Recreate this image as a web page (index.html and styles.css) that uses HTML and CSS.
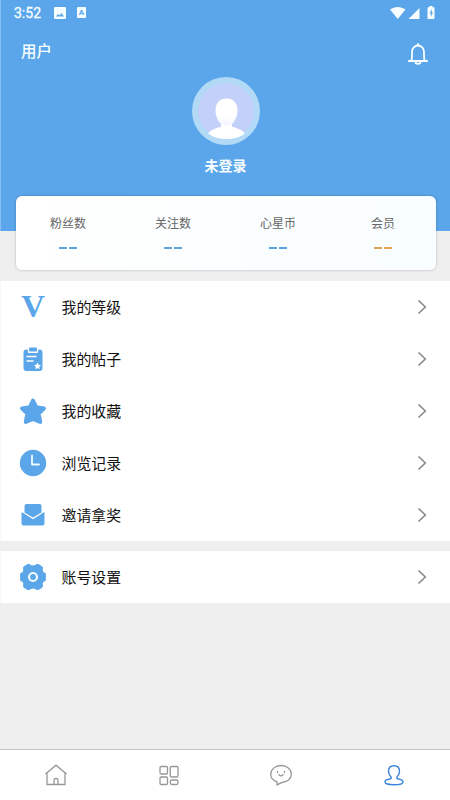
FILE: index.html
```html
<!DOCTYPE html>
<html lang="zh-CN">
<head>
<meta charset="utf-8">
<title>用户</title>
<link rel="stylesheet" href="styles.css">
</head>
<body>
<div class="app">
  <header class="hero">
    <div class="status">
      <span class="time">3:52</span>
      <svg class="st-image" width="12" height="12" viewBox="0 0 12 12"><rect width="12" height="12" rx="1.2" fill="#f4fdff"/><path d="M2 9.500 4 7l1.500 1.400L7.500 6 10 9.500z" fill="#5ba6ea"/></svg>
      <span class="st-letter">A</span>
      <svg class="st-right" width="46" height="14" viewBox="0 0 46 14" fill="#f8feff"><path d="M0 3.500C4.700 0 10.800 0 15.500 3.500L7.750 13z"/><path d="M29.500 2v11h-11z"/><path d="M39.500 1.200V0h3v1.200h1.300q.7 0 .7.700v10.400q0 .7-.7.700h-5.600q-.7 0-.7-.7V1.900q0-.7.7-.7z"/><path d="M41.800 3 39.500 7.500h1.300v3.500l2.200-4.500h-1.200z" fill="#5ba6ea"/></svg>
    </div>
    <div class="titlebar">
      <h1>用户</h1>
      <svg width="22" height="24" viewBox="0 0 22 24" fill="none" stroke="#f8feff" stroke-width="1.800" stroke-linecap="round" stroke-linejoin="round"><path d="M11 2v1.500M1.800 19h18.400M4 19c1-1.300 1-2.500 1-4.500V9.800a6 6.300 0 0 1 12 0v4.700c0 2 0 3.200 1 4.500"/><path d="M8.500 20a2.500 1.800 0 0 0 5 0"/></svg>
    </div>
    <div class="profile">
      <svg width="68" height="68" viewBox="0 0 68 68"><defs><linearGradient id="face" x1="0" y1="0" x2="0" y2="1"><stop offset=".6" stop-color="#fff"/><stop offset="1" stop-color="#f4f5ff"/></linearGradient></defs><circle cx="34" cy="34" r="34" fill="#b2daf6"/><circle cx="34" cy="34" r="28" fill="#c3d1fa"/><path d="M16 56.500c3-3.700 8-5.500 13-6.700V45h11v4.800c5 1.200 10 3 13 6.700C48 60.300 41 62 34.500 62S21 60.300 16 56.500z" fill="#fff"/><path d="M34.500 21.500c6.800 0 11 4.800 11 11.500 0 8.500-4.600 16-11 16s-11-7.500-11-16c0-6.700 4.200-11.500 11-11.500z" fill="url(#face)"/></svg>
      <strong>未登录</strong>
    </div>
  </header>
  <section class="stats">
    <div class="stat"><span>粉丝数</span><div class="dashes"><i></i><i></i></div></div>
    <div class="stat"><span>关注数</span><div class="dashes"><i></i><i></i></div></div>
    <div class="stat"><span>心星币</span><div class="dashes"><i></i><i></i></div></div>
    <div class="stat"><span>会员</span><div class="dashes gold"><i></i><i></i></div></div>
  </section>
  <main>
    <section class="menu">
      <div class="row"><div class="icon level"><span>V</span></div><span>我的等级</span><svg class="chev" width="10" height="16" viewBox="0 0 10 16"><path d="M1.500 1.500l6.800 6.500-6.800 6.500"/></svg></div>
      <div class="row"><div class="icon"><svg width="28" height="28" viewBox="0 0 28 28"><path d="M7.500 4.500h1.300v2q0 1.500 1.500 1.500h7.400q1.500 0 1.500-1.500v-2h1.300q3 0 3 3v15.400q0 3-3 3h-13q-3 0-3-3V7.500q0-3 3-3z"/><rect x="10" y="2.500" width="8" height="4" rx="1"/><path d="M8 11.500h9M8 16h6" stroke="#fff" stroke-width="1.500" stroke-linecap="round"/><path d="m18.500 17.500 1.100 2.200 2.400.4-1.700 1.700.4 2.400-2.200-1.100-2.200 1.100.4-2.400-1.700-1.700 2.400-.4z" fill="#fff"/></svg></div><span>我的帖子</span><svg class="chev" width="10" height="16" viewBox="0 0 10 16"><path d="M1.500 1.500l6.800 6.500-6.800 6.500"/></svg></div>
      <div class="row"><div class="icon"><svg width="28" height="28" viewBox="0 0 28 28"><path d="m14 3.500 3.200 6.700 7.800 1.200-5.300 5.300 1.500 8.300L14 22l-7.200 3 1.500-8.300L3 11.400l7.800-1.200z" stroke="#5ba5e9" stroke-width="4" stroke-linejoin="round"/></svg></div><span>我的收藏</span><svg class="chev" width="10" height="16" viewBox="0 0 10 16"><path d="M1.500 1.500l6.800 6.500-6.800 6.500"/></svg></div>
      <div class="row"><div class="icon"><svg width="28" height="28" viewBox="0 0 28 28"><circle cx="14" cy="14" r="13.200"/><path d="M13 6.500v9h7" fill="none" stroke="#eefaff" stroke-width="1.800" stroke-linecap="round" stroke-linejoin="round"/></svg></div><span>浏览记录</span><svg class="chev" width="10" height="16" viewBox="0 0 10 16"><path d="M1.500 1.500l6.800 6.500-6.800 6.500"/></svg></div>
      <div class="row"><div class="icon"><svg width="28" height="28" viewBox="0 0 28 28"><path d="M7.500 3h13q2 0 2 2v6.500L14 16.500l-8.500-5V5q0-2 2-2z"/><path d="M2.500 12q0-1 1-.5L14 18.300l10.500-6.800q1-.5 1 .5v10.500q0 2-2 2h-19q-2 0-2-2z"/></svg></div><span>邀请拿奖</span><svg class="chev" width="10" height="16" viewBox="0 0 10 16"><path d="M1.500 1.500l6.800 6.500-6.800 6.500"/></svg></div>
    </section>
    <section class="menu">
      <div class="row"><div class="icon"><svg width="28" height="28" viewBox="0 0 28 28"><path d="M8.500 1.500h2q1.500 1.500 3.500 1.500t3.500-1.500h2l3.800 2.500v3.800q.3 2 3 2.700v7q-2.700.7-3 2.700V24l-3.800 2.500h-2q-1.500-1.500-3.500-1.500t-3.500 1.500h-2L4.700 24v-3.800q-.3-2-3-2.700v-7q2.700-.7 3-2.700V4z" stroke="#5ba5e9" stroke-width="1" stroke-linejoin="round"/><circle cx="14" cy="14" r="4" fill="none" stroke="#f2fbff" stroke-width="2.200"/></svg></div><span>账号设置</span><svg class="chev" width="10" height="16" viewBox="0 0 10 16"><path d="M1.500 1.500l6.800 6.500-6.800 6.500"/></svg></div>
    </section>
  </main>
  <nav>
    <div><svg width="24" height="24" viewBox="0 0 24 24"><path d="M1.500 11 12 2.200 22.500 11M3 10v11.500h18V10M10 21.500v-4.500q0-1.500 2-1.500t2 1.500v4.500"/></svg></div>
    <div><svg width="24" height="24" viewBox="0 0 24 24"><rect x="3" y="3.500" width="7.500" height="7.500" rx="1.300"/><rect x="13.300" y="3.500" width="7.700" height="10.500" rx="1.300"/><rect x="3" y="14" width="7.500" height="7.500" rx="1.300"/><rect x="13.300" y="17" width="7.700" height="4.500" rx="1.500"/></svg></div>
    <div><svg width="24" height="24" viewBox="0 0 24 24"><path d="M8 22v-3.200C4 17.500 1.700 15 1.700 11.500c0-5 4.500-9 10.300-9s10.300 4 10.300 8.700c0 4.800-4.300 8-9.300 8.300-2 .2-3 1.500-5 2.500z"/><path d="M8.500 8.500v1M15.500 8.500v1M10 11.800q2 2.200 4 0" stroke-linecap="round"/></svg></div>
    <div class="active"><svg width="24" height="24" viewBox="0 0 24 24"><path d="M12 2.800c3.500 0 5.500 2.400 5.500 5.600 0 2.400-1 3.800-2.300 5.400-.8 1-.5 2 .8 2.200 3 .4 5 1.300 5 2.900 0 2-4.200 2.800-9 2.800s-9-.8-9-2.800c0-1.600 2-2.500 5-2.900 1.300-.2 1.600-1.200.8-2.200C7.500 12.200 6.500 10.800 6.500 8.400c0-3.200 2-5.600 5.500-5.600z"/></svg></div>
  </nav>
</div>
</body>
</html>
```
FILE: styles.css
```css
* { box-sizing: border-box; }
body { margin: 0; font-family: "Noto Sans CJK SC", "Noto Sans", sans-serif; }
.app { width: 450px; height: 800px; display: flex; flex-direction: column; background: #efefef; overflow: hidden; }
svg { display: block; flex: none; }
.hero { height: 231px; flex: none; background: #5ba6ea; border-left: 1px solid #83bff0; color: #f8feff; }
.status { height: 25px; display: flex; align-items: center; padding: 0 14px 0 13px; }
.time { width: 40px; font: 400 14px/24px Roboto, sans-serif; -webkit-text-stroke: .3px; }
.st-letter { width: 9px; height: 11px; margin-left: 11px; border-radius: 1px; background: #f4fdff; color: #5ba6ea; font: 700 8px/11px Roboto, sans-serif; text-align: center; }
.st-right { margin-left: auto; }
.titlebar { display: flex; justify-content: space-between; height: 52px; padding: 17px 21.500px 0 20px; }
h1 { margin: 0; font-size: 15.5px; line-height: 17px; font-weight: 500; }
.profile { display: flex; flex-direction: column; align-items: center; }
.profile strong { margin-top: 10px; font-size: 14px; line-height: 20px; font-weight: 700; }
.stats { position: relative; display: flex; flex: none; margin: -35px 14.500px 0 15.500px; height: 74px; border-radius: 6px; background: linear-gradient(90deg, #fff, #f8fdff); box-shadow: 0 0 3px rgba(0,0,0,.25); }
.stat { flex: 1; display: flex; flex-direction: column; align-items: center; padding-top: 17px; font-size: 12px; line-height: 20px; color: #666; }
.dashes { display: flex; gap: 2px; margin-top: 14px; }
.dashes i { width: 8px; height: 2px; background: #5ba3df; }
.gold i { background: #e5a34f; }
main { margin-top: 11px; display: flex; flex-direction: column; gap: 10px; }
.menu { background: #fff; border-left: 1px solid #f7f7f7; }
.row { height: 52px; display: flex; align-items: center; padding: 0 23px 0 18px; font-size: 14.900px; line-height: 22px; color: #111; }
.icon { width: 28px; height: 28px; margin-right: 14.500px; display: flex; align-items: center; justify-content: center; fill: #5ba5e9; }
.level { color: #5ba5e9; font: 700 31px/28px "Liberation Serif", serif; }
.level span { transform: scaleX(1.06); }
.chev { margin-left: auto; fill: none; stroke: #8c8c8c; stroke-width: 1.7; }
nav { margin-top: auto; height: 51px; display: flex; border-top: 1px solid #c2c2c2; background: #fff; }
nav div { flex: 1; display: flex; align-items: center; justify-content: center; padding: 0 0 1px; fill: none; stroke: #979797; stroke-width: 1.3; }
nav .active { stroke: #3c83df; stroke-width: 1.4; }
```
